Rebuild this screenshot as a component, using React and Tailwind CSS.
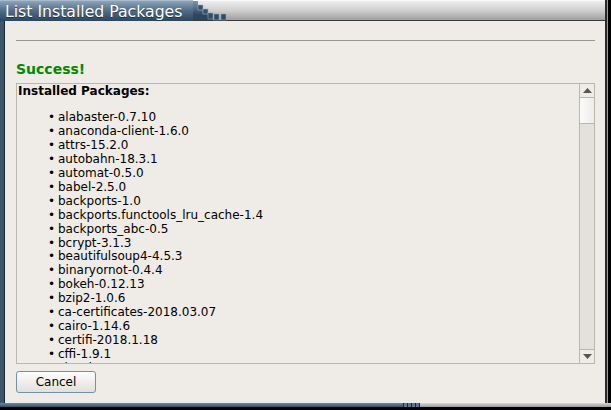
const packages = [
  'alabaster-0.7.10',
  'anaconda-client-1.6.0',
  'attrs-15.2.0',
  'autobahn-18.3.1',
  'automat-0.5.0',
  'babel-2.5.0',
  'backports-1.0',
  'backports.functools_lru_cache-1.4',
  'backports_abc-0.5',
  'bcrypt-3.1.3',
  'beautifulsoup4-4.5.3',
  'binaryornot-0.4.4',
  'bokeh-0.12.13',
  'bzip2-1.0.6',
  'ca-certificates-2018.03.07',
  'cairo-1.14.6',
  'certifi-2018.1.18',
  'cffi-1.9.1',
  'chardet-3.0.4',
]

function TitleBar() {
  return (
    <div className="flex h-[21px] shrink-0">
      <div className="w-[193px] shrink-0 bg-gradient-to-b from-[#8ea4b8] via-[#4f6b86] to-[#2c465f] border-t border-[#a9bccd] pl-[5px] pt-[3px] text-[15.7px] leading-none text-white [text-shadow:0_1px_0_#1d2f40]">
        List Installed Packages
      </div>
      <div className="relative flex-1 border-t border-[#f8f8f8] border-b border-b-[#3a3a3a] bg-gradient-to-b from-[#eeeeee] via-[#cfcfcf] to-[#9f9f9f]">
        <svg width="40" height="20" viewBox="0 0 40 20" className="absolute left-0 top-0">
          <defs>
            <linearGradient id="tb" x1="0" y1="0" x2="0" y2="1">
              <stop offset="0" stopColor="#7f96ab" />
              <stop offset="1" stopColor="#2c465f" />
            </linearGradient>
          </defs>
          <polygon points="0,0 5,0 5,4 10,4 10,8 15,8 15,12 20,12 20,14 0,14" fill="url(#tb)" />
          <rect x="0" y="14" width="20" height="5" fill="#2c465f" />
          <rect x="5" y="4" width="5" height="5" fill="#355069" stroke="#9fb2c4" strokeWidth="0.6" />
          <rect x="10" y="8" width="5" height="5" fill="#355069" stroke="#9fb2c4" strokeWidth="0.6" />
          <rect x="15" y="12" width="5" height="6" fill="#2f4a63" stroke="#8ea3b6" strokeWidth="0.6" />
          <rect x="21" y="13" width="5" height="6" fill="#2f4a63" stroke="#8ea3b6" strokeWidth="0.6" />
          <rect x="28" y="13" width="5" height="6" fill="#2f4a63" stroke="#8ea3b6" strokeWidth="0.6" />
        </svg>
      </div>
      <div className="w-[6px] shrink-0 flex">
        <div className="w-[2px] bg-[#2a2a2a]" />
        <div className="w-px bg-[#9a9a9a]" />
        <div className="flex-1 bg-black" />
      </div>
    </div>
  )
}

function Scrollbar() {
  return (
    <div className="flex w-[15px] shrink-0 flex-col border-l border-[#bab6b0]">
      <div className="flex h-[14px] items-center justify-center border-b border-[#bab6b0] bg-[#efebe7]">
        <svg width="9" height="5" viewBox="0 0 9 5">
          <polygon points="4.5,0 9,5 0,5" fill="#555" />
        </svg>
      </div>
      <div className="h-[26px] border-b border-[#bab6b0] bg-gradient-to-r from-[#fbfbfa] to-[#eeece9]" />
      <div className="flex-1 bg-[#e4e1dc]" />
      <div className="flex h-[14px] items-center justify-center border-t border-[#bab6b0] bg-[#efebe7]">
        <svg width="9" height="5" viewBox="0 0 9 5">
          <polygon points="0,0 9,0 4.5,5" fill="#555" />
        </svg>
      </div>
    </div>
  )
}

export default function App() {
  return (
    <div className="flex h-[410px] w-[611px] flex-col overflow-hidden bg-black font-['DejaVu_Sans',sans-serif] text-black">
      <TitleBar />
      <div className="flex h-[382px] shrink-0">
        <div className="w-[4px] bg-[#3c566e]" />
        <div className="w-px bg-[#1c2630]" />
        <div className="flex flex-1 flex-col bg-[#efebe7] pl-[11px] pr-[10px]">
          <div className="mt-[19px] h-px bg-[#9a9793]" />
          <div className="mt-[20px] text-[14px] font-bold leading-[16px] text-[#008a00]">Success!</div>
          <div className="mt-[6px] flex h-[281px] border border-[#bab6b0]">
            <div className="flex-1 overflow-hidden pl-px pt-[1px] text-[12px] leading-[13.95px]">
              <div className="font-bold">Installed Packages:</div>
              <ul className="my-[12px] pl-[30px]">
                {packages.map((p) => (
                  <li key={p} className="flex">
                    <span className="w-[10px] shrink-0">•</span>
                    <span>{p}</span>
                  </li>
                ))}
              </ul>
            </div>
            <Scrollbar />
          </div>
          <button className="mt-[7px] h-[22px] w-[80px] rounded-[3px] border border-[#7090ab] bg-gradient-to-b from-[#fdfdfd] to-[#e2e0dc] text-[12px] leading-none text-black">
            Cancel
          </button>
        </div>
        <div className="flex w-[6px]">
          <div className="w-[2px] bg-[#2a2a2a]" />
          <div className="w-px bg-[#9a9a9a]" />
          <div className="flex-1 bg-black" />
        </div>
      </div>
      <div className="flex h-[4px] shrink-0">
        <div className="w-[403px] bg-gradient-to-b from-[#6f8aa3] to-[#34506a]" />
        <div className="flex w-[17px] gap-px bg-[#1e2c3a] px-px">
          <div className="flex-1 bg-[#5a7893]" />
          <div className="flex-1 bg-[#5a7893]" />
          <div className="flex-1 bg-[#5a7893]" />
          <div className="flex-1 bg-[#5a7893]" />
        </div>
        <div className="flex-1 bg-gradient-to-b from-[#d8d8d8] to-[#9a9a9a]" />
      </div>
    </div>
  )
}
